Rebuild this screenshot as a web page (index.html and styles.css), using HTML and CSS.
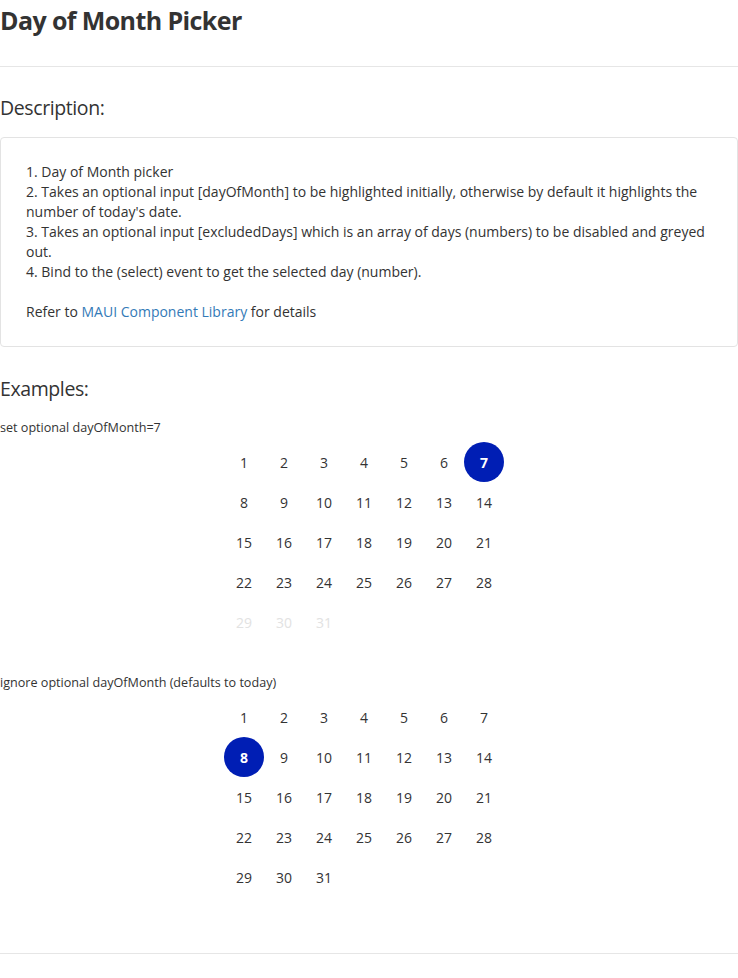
FILE: index.html
```html
<!DOCTYPE html>
<html>
<head>
<meta charset="utf-8">
<link rel="stylesheet" href="styles.css">
</head>
<body>
<h1 class="title">Day of Month Picker</h1>
<hr class="rule">
<h3 class="section">Description:</h3>
<div class="desc">
  <p>1. Day of Month picker<br>
  2. Takes an optional input [dayOfMonth] to be highlighted initially, otherwise by default it highlights the number of today's date.<br>
  3. Takes an optional input [excludedDays] which is an array of days (numbers) to be disabled and greyed out.<br>
  4. Bind to the (select) event to get the selected day (number).<br>
  <br>
  Refer to <a class="link" href="#">MAUI Component Library</a> for details</p>
</div>
<h3 class="section examples">Examples:</h3>
<div class="label">set optional dayOfMonth=7</div>
<div class="picker">
  <span class="day">1</span><span class="day">2</span><span class="day">3</span><span class="day">4</span><span class="day">5</span><span class="day">6</span><span class="day selected">7</span>
  <span class="day">8</span><span class="day">9</span><span class="day">10</span><span class="day">11</span><span class="day">12</span><span class="day">13</span><span class="day">14</span>
  <span class="day">15</span><span class="day">16</span><span class="day">17</span><span class="day">18</span><span class="day">19</span><span class="day">20</span><span class="day">21</span>
  <span class="day">22</span><span class="day">23</span><span class="day">24</span><span class="day">25</span><span class="day">26</span><span class="day">27</span><span class="day">28</span>
  <span class="day disabled">29</span><span class="day disabled">30</span><span class="day disabled">31</span>
</div>
<div class="label label2">ignore optional dayOfMonth (defaults to today)</div>
<div class="picker">
  <span class="day">1</span><span class="day">2</span><span class="day">3</span><span class="day">4</span><span class="day">5</span><span class="day">6</span><span class="day">7</span>
  <span class="day selected">8</span><span class="day">9</span><span class="day">10</span><span class="day">11</span><span class="day">12</span><span class="day">13</span><span class="day">14</span>
  <span class="day">15</span><span class="day">16</span><span class="day">17</span><span class="day">18</span><span class="day">19</span><span class="day">20</span><span class="day">21</span>
  <span class="day">22</span><span class="day">23</span><span class="day">24</span><span class="day">25</span><span class="day">26</span><span class="day">27</span><span class="day">28</span>
  <span class="day">29</span><span class="day">30</span><span class="day">31</span>
</div>
<hr class="rule bottom">
</body>
</html>
```
FILE: styles.css
```css
html, body {
  margin: 0;
  padding: 0;
  background: #fff;
}
body {
  font-family: "Open Sans", "Liberation Sans", sans-serif;
  color: #333;
  font-size: 14px;
}
.title {
  margin: 0;
  font-family: "Open Sans", sans-serif;
  font-weight: 700;
  font-size: 25px;
  letter-spacing: -0.6px;
  line-height: 40px;
  color: #333;
}
.rule {
  margin: 26px 0 0;
  border: 0;
  border-top: 1px solid #e6e6e6;
  height: 0;
}
.rule.bottom {
  margin-top: 56px;
}
.section {
  margin: 29px 0 0;
  font-family: "Open Sans", sans-serif;
  font-weight: 400;
  font-size: 19.5px;
  letter-spacing: -0.4px;
  line-height: 24px;
  color: #333;
}
.section.examples {
  margin-top: 30px;
}
.desc {
  margin-top: 17px;
  border: 1px solid #e3e3e3;
  border-radius: 4px;
  padding: 24px 25px 24px 25px;
}
.desc p {
  margin: 0;
  font-size: 14px;
  line-height: 20px;
}
.link {
  color: #337ab7;
  text-decoration: none;
}
.label {
  margin-top: 18px;
  font-size: 12.6px;
  line-height: 18px;
}
.label2 {
  margin-top: 32px;
}
.picker {
  display: grid;
  grid-template-columns: repeat(7, 40px);
  grid-auto-rows: 40px;
  width: 280px;
  margin: 5px 0 0 224px;
}
.day {
  display: flex;
  align-items: center;
  justify-content: center;
  font-size: 14px;
  color: #333;
  border-radius: 50%;
}
.day.selected {
  background: #001eb4;
  color: #fff;
  font-weight: 700;
}
.day.disabled {
  color: #e2e2e2;
}
```
